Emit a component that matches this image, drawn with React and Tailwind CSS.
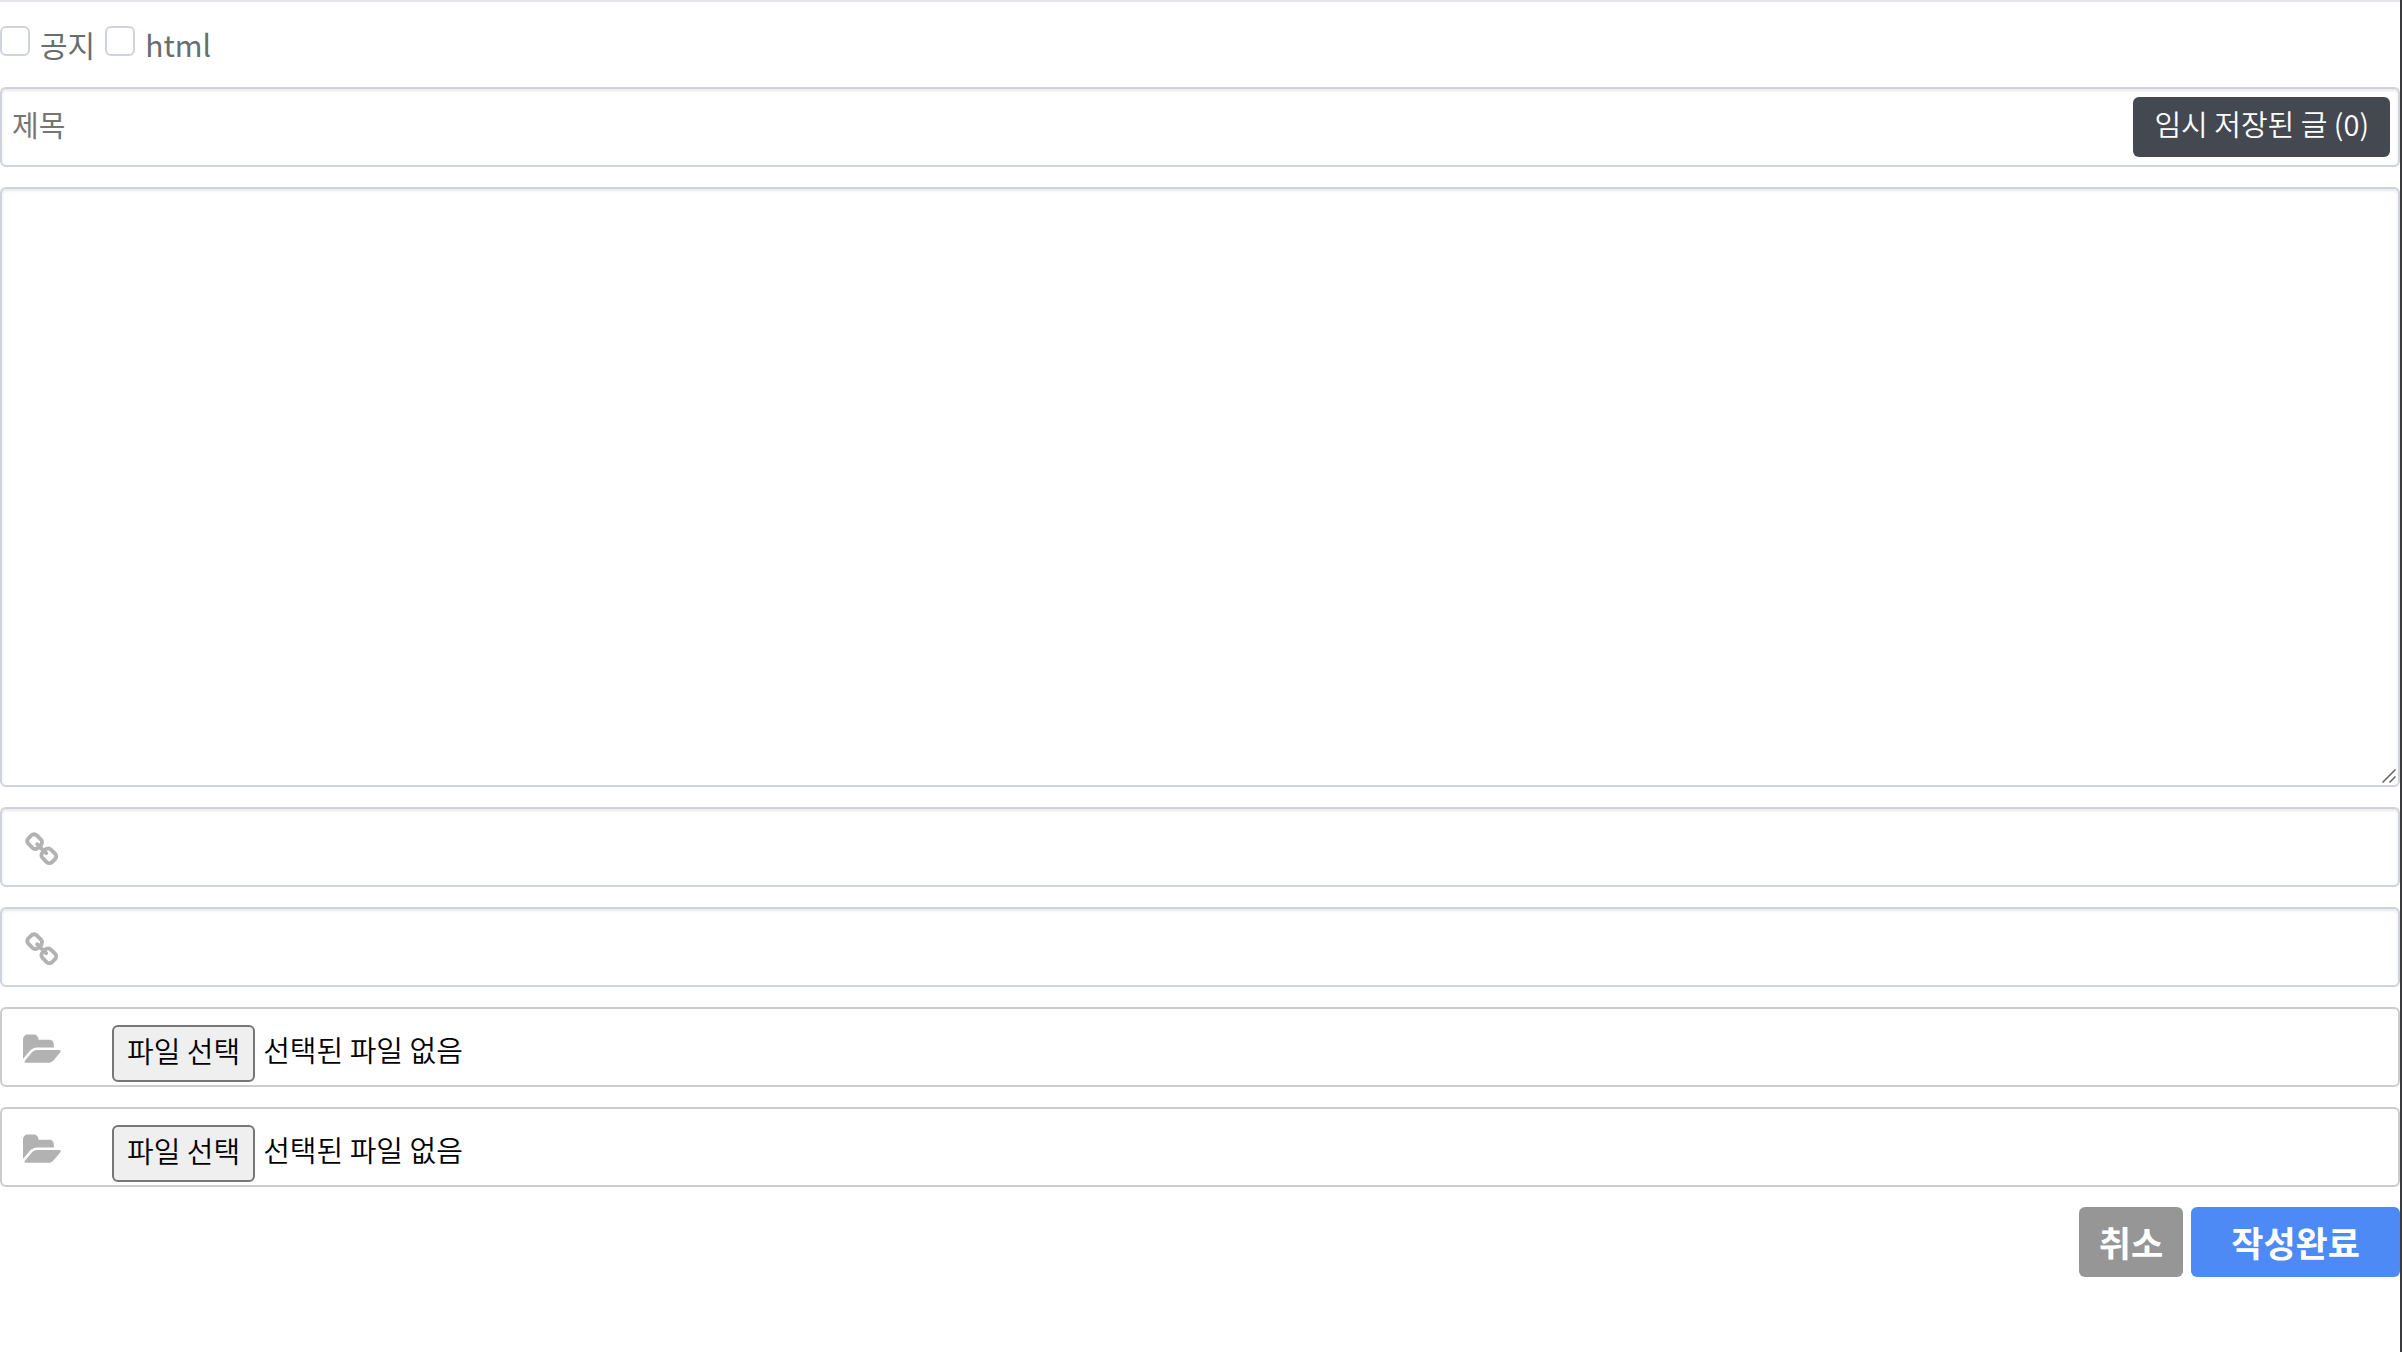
import React, { useRef, useState } from 'react';

const LinkIcon = () => (
  <svg viewBox="0 0 1792 1792" className="h-9 w-9 fill-current" aria-hidden="true">
    <path d="M1456 1216q0-40-28-68l-208-208q-28-28-68-28-42 0-72 32 3 3 19 18.500t21.500 21.500 15 19 13 25.500 3.500 27.500q0 40-28 68t-68 28q-15 0-27.500-3.500t-25.500-13-19-15-21.500-21.500-18.500-19q-33 31-33 73 0 40 28 68l206 207q27 27 68 27 40 0 68-26l147-146q28-28 28-67zm-703-705q0-40-28-68l-206-207q-28-28-68-28-39 0-68 27l-147 146q-28 28-28 67 0 40 28 68l208 208q27 27 68 27 42 0 72-31-3-3-19-18.500t-21.500-21.500-15-19-13-25.500-3.500-27.500q0-40 28-68t68-28q15 0 27.500 3.500t25.500 13 19 15 21.500 21.500 18.500 19q33-31 33-73zm895 705q0 120-85 203l-147 146q-83 83-203 83-121 0-204-85l-206-207q-83-83-83-203 0-123 88-209l-88-88q-86 88-208 88-120 0-204-84l-208-208q-84-84-84-204t85-203l147-146q83-83 203-83 121 0 204 85l206 207q83 83 83 203 0 123-88 209l88 88q86-88 208-88 120 0 204 84l208 208q84 84 84 204z" />
  </svg>
);

const FolderIcon = () => (
  <svg viewBox="0 0 1892 1792" className="h-9 w-[38px] fill-current" aria-hidden="true">
    <path d="M1879 952q0 31-31 66l-336 396q-43 51-120.500 86.500t-143.500 35.500h-1088q-34 0-60.500-13t-26.500-43q0-31 31-66l336-396q43-51 120.500-86.500t143.500-35.500h1088q34 0 60.500 13t26.500 43zm-343-344v160h-832q-94 0-197 47.500t-164 119.500l-337 396-5 6q0-4-.5-12.500t-.5-12.500v-960q0-92 66-158t158-66h320q92 0 158 66t66 158v32h544q92 0 158 66t66 158z" />
  </svg>
);

const CheckOption = ({ id, label }) => (
  <>
    <input
      type="checkbox"
      id={id}
      className="h-[30px] w-[30px] appearance-none rounded-md border-2 border-[#d0d3df] bg-white checked:bg-[#4d8af5]"
    />
    <label htmlFor={id} className="ml-2.5 mr-2.5 mt-[3px] text-[30px] leading-[30px] text-[#676e70]">{label}</label>
  </>
);

const LinkField = ({ id, label }) => (
  <div className="flex h-20 items-center rounded-md border-2 border-[#d0d3db] bg-white shadow-[inset_0_2px_3px_#e8e8e8]">
    <label htmlFor={id} aria-label={label} className="ml-[23px] mt-1.5 text-[#b2b2b2]">
      <LinkIcon />
    </label>
    <input type="url" id={id} className="ml-6 h-full min-w-0 flex-1 bg-transparent outline-none" />
  </div>
);

const FileField = ({ id, label }) => {
  const fileRef = useRef(null);
  const [fileName, setFileName] = useState('');

  return (
    <div className="flex h-20 items-center rounded-md border-2 border-[#ccc] bg-white font-[350]">
      <label htmlFor={id} aria-label={label} className="ml-[21px] mt-1.5 text-[#b2b2b2]">
        <FolderIcon />
      </label>
      <input
        type="file"
        id={id}
        ref={fileRef}
        className="hidden"
        onChange={(e) => setFileName(e.target.files[0]?.name || '')}
      />
      <button
        type="button"
        onClick={() => fileRef.current.click()}
        className="ml-[51px] mt-3 h-[57px] rounded-md border-2 border-[#767676] bg-[#efefef] px-[13px] pb-1.5 leading-10 text-black"
      >
        파일 선택
      </button>
      <span className="ml-2 mt-1.5 text-black">{fileName || '선택된 파일 없음'}</span>
    </div>
  );
};

function App() {
  const [title, setTitle] = useState('');
  const [content, setContent] = useState('');

  return (
    <div className="min-h-screen border-r-2 border-[#3b3b3d] bg-white font-['Noto_Sans_CJK_KR',sans-serif] text-[29px]">
      <form onSubmit={(e) => e.preventDefault()} className="flex flex-col gap-5 border-t-2 border-[#e5e5ea] pt-6">
        <div className="flex h-[41px] items-start">
          <CheckOption id="notice" label="공지" />
          <CheckOption id="html" label="html" />
        </div>

        <div className="flex h-20 items-center rounded-md border-2 border-[#d0d3db] bg-white pr-2 shadow-[inset_0_2px_3px_#e8e8e8]">
          <input
            type="text"
            aria-label="제목"
            placeholder="제목"
            value={title}
            onChange={(e) => setTitle(e.target.value)}
            className="h-full min-w-0 flex-1 bg-transparent px-2.5 pb-1.5 outline-none placeholder:text-[#757575]"
          />
          <button type="button" className="h-[60px] rounded-md bg-[#434851] px-[21px] pb-1.5 font-[350] text-white">
            임시 저장된 글 (0)
          </button>
        </div>

        <div className="relative">
          <textarea
            aria-label="내용"
            value={content}
            onChange={(e) => setContent(e.target.value)}
            className="block h-[600px] w-full resize-none rounded-md border-2 border-[#d0d3db] bg-white p-2.5 shadow-[inset_0_2px_3px_#e8e8e8] outline-none"
          />
          <svg viewBox="0 0 14 14" className="pointer-events-none absolute bottom-1 right-1 h-3.5 w-3.5" aria-hidden="true">
            <path d="M0.500 13.500L13.500 0.500M7.500 13.500L13.500 7.500" stroke="#616161" strokeWidth="1.500" fill="none" />
          </svg>
        </div>

        <LinkField id="link1" label="링크 1" />
        <LinkField id="link2" label="링크 2" />
        <FileField id="file1" label="파일 1" />
        <FileField id="file2" label="파일 2" />

        <div className="flex justify-end gap-2 text-[35px] font-bold text-white">
          <button type="button" className="h-[70px] rounded-md bg-[#969696] px-5">취소</button>
          <button type="submit" className="h-[70px] rounded-md bg-[#4d8af5] px-10">작성완료</button>
        </div>
      </form>
    </div>
  );
}

export default App;
